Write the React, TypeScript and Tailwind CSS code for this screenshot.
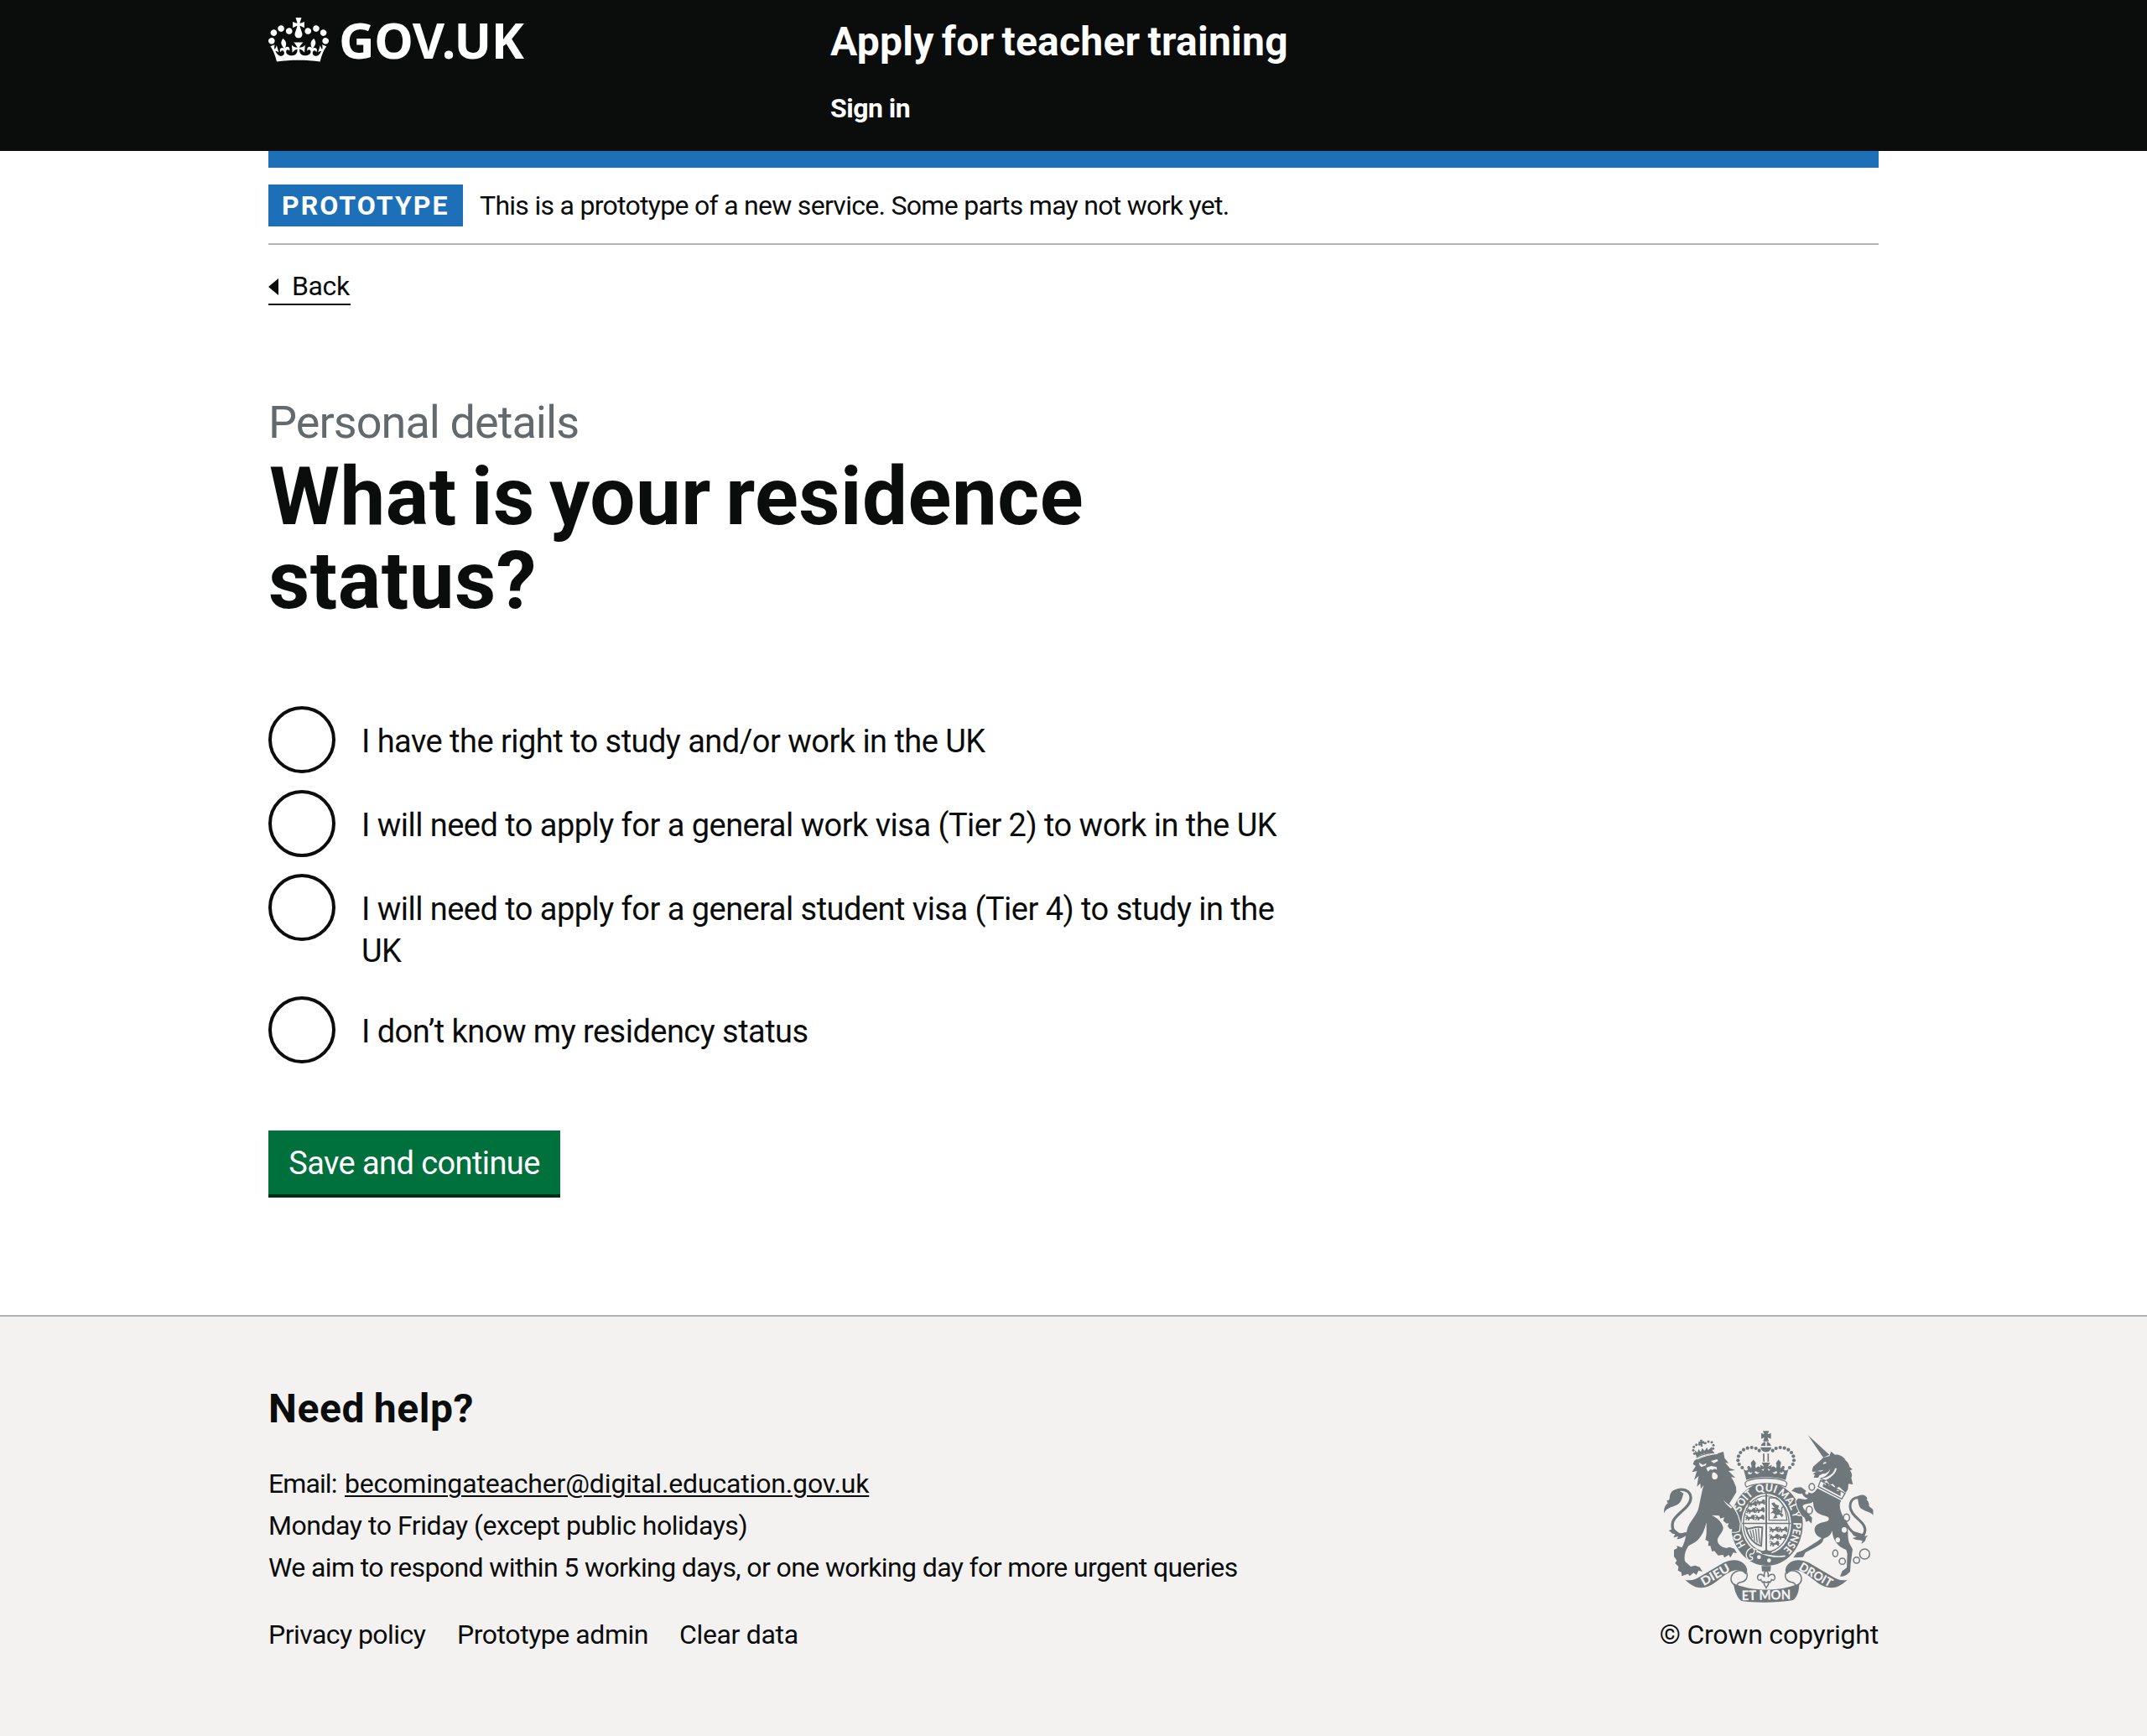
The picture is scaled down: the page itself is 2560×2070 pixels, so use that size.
import type { ReactNode } from 'react';

const INK = '#6f777b';
const PAPER = '#f3f2f1';

function Crown() {
  return (
    <svg viewBox="0 0 132 97" className="block h-[53px] w-[72px] fill-white" aria-hidden="true">
      <path d="M25 30.2c3.5 1.5 7.7-.2 9.1-3.7 1.5-3.6-.2-7.8-3.9-9.2-3.6-1.4-7.6.3-9.1 3.9-1.4 3.5.3 7.5 3.9 9zM9 39.5c3.6 1.5 7.8-.2 9.2-3.7 1.5-3.6-.2-7.8-3.9-9.1-3.6-1.5-7.6.2-9.1 3.8-1.4 3.5.3 7.5 3.8 9zM4.4 57.2c3.5 1.5 7.7-.2 9.1-3.8 1.5-3.6-.2-7.7-3.9-9.1-3.5-1.5-7.6.3-9.1 3.8-1.4 3.5.3 7.6 3.9 9.1zm38.3-21.4c3.5 1.5 7.7-.2 9.1-3.8 1.5-3.6-.2-7.7-3.9-9.1-3.6-1.5-7.6.3-9.1 3.8-1.3 3.6.4 7.7 3.9 9.1zm64.4-5.6c-3.6 1.5-7.8-.2-9.1-3.7-1.5-3.6.2-7.8 3.8-9.2 3.6-1.4 7.7.3 9.2 3.9 1.3 3.5-.4 7.5-3.9 9zm15.9 9.3c-3.6 1.5-7.7-.2-9.1-3.7-1.5-3.6.2-7.8 3.7-9.1 3.6-1.5 7.7.2 9.2 3.8 1.5 3.5-.3 7.5-3.8 9zm4.7 17.7c-3.6 1.5-7.8-.2-9.2-3.8-1.5-3.6.2-7.7 3.9-9.1 3.6-1.5 7.7.3 9.2 3.8 1.3 3.5-.4 7.6-3.9 9.1zM89.3 35.8c-3.6 1.5-7.8-.2-9.2-3.8-1.4-3.6.2-7.7 3.9-9.1 3.6-1.5 7.7.3 9.2 3.8 1.4 3.6-.3 7.7-3.9 9.1zM69.7 17.7l8.9 4.7V9.3l-8.9 2.8c-.2-.3-.5-.6-.9-.9L72.4 0H59.6l3.5 11.2c-.3.3-.6.5-.9.9l-8.8-2.8v13.1l8.8-4.7c.3.3.6.7.9.9l-5 15.4v.1c-.2.8-.4 1.6-.4 2.4 0 4.1 3.1 7.5 7 8.1h.2c.3 0 .7.1 1 .1.4 0 .7 0 1-.1h.2c4-.6 7.1-4.1 7.1-8.1 0-.8-.1-1.7-.4-2.4V34l-5.1-15.4c.4-.2.7-.6 1-.9zM66 92.8c16.9 0 32.8 1.1 47.1 3.2 4-16.9 8.9-26.7 14-33.5l-9.6-3.4c1 4.9 1.1 7.2 0 10.2-1.5-1.4-3-4.3-4.2-8.7L108.6 76c2.8-2 5-3.2 7.5-3.3-4.4 9.4-10 11.9-13.6 11.2-4.3-.8-6.3-4.6-5.6-7.9 1-4.7 5.7-5.9 8-.5 4.3-8.7-3-11.4-7.6-8.8 7.1-7.2 7.9-13.5 2.1-21.1-8 6.1-8.1 12.3-4.5 20.8-4.7-5.4-12.1-2.5-9.5 6.2 3.4-5.2 7.9-2 7.2 3.1-.6 4.3-6.4 7.8-13.5 7.2-10.3-.9-10.9-8-11.2-13.8 2.5-.5 7.1 1.8 11 7.3L80.2 60c-4.1 4.4-8 5.3-12.3 5.4 1.4-4.4 8-11.6 8-11.6H55.5s6.4 7.2 7.9 11.6c-4.2-.1-8-1-12.3-5.4l1.4 16.4c3.9-5.5 8.5-7.7 10.9-7.3-.3 5.8-.9 12.8-11.1 13.8-7.2.6-12.9-2.9-13.5-7.2-.7-5 3.8-8.3 7.1-3.1 2.7-8.7-4.6-11.6-9.4-6.2 3.7-8.5 3.6-14.7-4.6-20.8-5.8 7.6-5 13.9 2.2 21.1-4.7-2.6-11.9.1-7.7 8.8 2.3-5.5 7.1-4.2 8.1.5.7 3.3-1.3 7.1-5.7 7.9-3.5.7-9-1.8-13.5-11.2 2.5.1 4.7 1.3 7.5 3.3l-4.7-15.4c-1.2 4.4-2.7 7.2-4.3 8.7-1.1-3-.9-5.3 0-10.2l-9.5 3.4c5 6.9 9.9 16.7 14 33.5 14.8-2.1 30.8-3.2 47.7-3.2z" />
    </svg>
  );
}

const pearls: [number, number][] = [
  [352, 178], [341, 166], [337, 152], [339, 137], [346, 124], [357, 114], [371, 108], [386, 106], [401, 109], [413, 117],
];
const lionPearls: [number, number][] = [
  [181, 128], [177, 116], [179, 104], [188, 96], [199, 95], [220, 90], [231, 85], [243, 87], [249, 98], [248, 110],
];
const motto: [string, string, number][] = [
  ['HO', '16.6%', 50], ['SOIT', '37%', 78], ['QUI', '49.9%', 70], ['MAL', '62%', 78], ['Y', '70.4%', 20], ['PENSE', '82.2%', 106],
];

/* A passant guardian lion, used in rows on the shield. */
function Leopard({ x, y }: { x: number; y: number }) {
  return (
    <path
      transform={`translate(${x} ${y})`}
      d="M0 17l4-3-3-6 5-1-2-6 5 1 3 5h9l2-5 6-3 5 4-1 5 5 2-5 2 2 6-6 0-3-4-9 0-2 6-6 0 2-5-4-1-2 6zM-2 6l4-7 3 1-4 5z"
    />
  );
}

function RoyalArms() {
  const ribbonEnd = (
    <g>
      <path d="M148 579C170 584 186 577 202 567L286 518C312 506 338 504 356 520C370 532 374 548 364 560C350 542 326 541 306 553C268 572 250 606 204 608C180 606 165 595 148 579Z" />
      <path
        d="M362 549C340 541 314 551 312 574C311 586 318 594 327 600M368 554C374 572 364 586 346 588C338 589 334 594 332 602"
        fill="none" stroke={INK} strokeWidth="4.5"
      />
    </g>
  );
  return (
    <svg viewBox="72 46 750 615" className="block h-[205px] w-[250px]" fill={INK} role="img" aria-label="Royal coat of arms">
      {/* ribbon */}
      {ribbonEnd}
      <g transform="translate(876 0) scale(-1 1)">{ribbonEnd}</g>
      <path d="M321 592C385 622 492 622 556 592C556 616 550 642 534 652C475 662 400 662 350 655C333 644 324 618 321 592Z" />
      <g fill={PAPER} fontFamily="Lato" fontWeight="900" textAnchor="middle">
        <text fontSize="43" transform="translate(263 574) rotate(-30)" textLength="112" lengthAdjust="spacingAndGlyphs">DIEU</text>
        <text fontSize="43" transform="translate(608 574) rotate(30)" textLength="130" lengthAdjust="spacingAndGlyphs">DROIT</text>
        <text fontSize="48" transform="translate(438 651) rotate(-1)" textLength="176" lengthAdjust="spacingAndGlyphs">ET MON</text>
      </g>

      {/* fleur-de-lis pendant */}
      <path d="M421 530L455 530L453 549L423 549Z" />
      <path
        d="M438 545C430 553 429 560 432 569C425 557 410 556 407 568C405 578 412 584 419 579C420 586 425 588 431 586L430 594C432 600 436 604 438 608C440 604 444 600 446 594L445 586C451 588 456 586 457 579C464 584 471 578 469 568C466 556 451 557 444 569C447 560 446 553 438 545ZM422 588H454"
        fill="none" stroke={INK} strokeWidth="4.5"
      />

      {/* imperial crown */}
      <path d="M426 47H448L443 59L455 54V75L443 70L447 84H427L431 70L420 75V54L431 59Z" />
      <path d="M419 100C421 92 427 87 435 86V100ZM440 86C448 87 453 92 455 100H440ZM417 105H457C455 114 447 122 437 122C427 122 419 114 417 105Z" />
      {pearls.map(([x, y]) => (
        <g key={x}>
          <circle cx={x} cy={y} r="6.3" />
          <circle cx={874 - x} cy={y} r="6.3" />
        </g>
      ))}
      <path d="M429 128V157M445 128V157" stroke={INK} strokeWidth="5" />
      <path d="M356 181C362 190 368 190 374 184C366 178 372 167 380 174L383 180C389 172 383 167 383 162C384 156 390 155 392 149C395 155 400 156 401 163C400 168 396 172 402 180C408 170 416 172 418 182L427 190L431 181L417 188V168L430 175L422 160H452L444 175L457 168V188L443 181L447 190L456 182C458 172 466 170 472 180C478 172 474 168 473 163C474 156 479 155 482 149C485 155 490 156 491 162C491 167 485 172 491 180L494 174C502 167 508 178 500 184C506 190 512 190 518 181L507 222C470 208 404 208 367 222Z" />
      <path d="M372 198C378 204 386 203 389 194C383 198 378 197 376 191ZM396 194C401 203 410 202 414 194C409 196 404 195 402 190ZM460 194C464 202 473 203 478 194L472 190C470 195 465 196 460 194ZM485 194C488 203 496 204 502 198L498 191C496 197 491 198 485 194Z" fill={PAPER} />
      <path d="M369 226C402 212 472 212 505 226C514 230 513 238 507 247C480 232 394 232 367 247C361 238 360 230 369 226Z" fill={PAPER} stroke={INK} strokeWidth="4" />

      {/* garter */}
      <ellipse cx="440" cy="380" rx="129" ry="149" />
      <path d="M368 242C396 226 480 226 508 242" fill="none" stroke={PAPER} strokeWidth="5" />
      <ellipse cx="438" cy="379" rx="89" ry="108" fill={PAPER} />
      <ellipse cx="438" cy="379" rx="82" ry="100" fill="none" stroke={INK} strokeWidth="4" />
      <path id="garter-line" d="M438 495A97 116 0 0 1 438 263A97 116 0 0 1 438 495" fill="none" />
      <g fill={PAPER} fontFamily="Lato" fontWeight="900" fontSize="39" textAnchor="middle">
        {motto.map(([word, at, len]) => (
          <text key={word}>
            <textPath href="#garter-line" startOffset={at} textLength={len} lengthAdjust="spacingAndGlyphs">{word}</textPath>
          </text>
        ))}
      </g>
      <path d="M395 470C425 492 470 500 506 494" fill="none" stroke={PAPER} strokeWidth="5" />
      <path d="M386 464C366 472 360 492 374 508C386 512 392 506 388 498C380 500 376 492 382 486C392 490 400 478 394 470C404 468 408 474 404 482" fill={INK} stroke={PAPER} strokeWidth="4" />
      <circle cx="412" cy="498" r="7" fill={PAPER} />
      <circle cx="448" cy="510" r="7" fill={PAPER} />

      {/* shield quarters */}
      <path d="M435 272H441V472L455 480H420L435 472ZM352 375H526V380H352Z" />
      <path d="M438 474L460 478L452 488H424L418 478Z" />
      <Leopard x={370} y={298} />
      <Leopard x={400} y={292} />
      <Leopard x={366} y={322} />
      <Leopard x={398} y={320} />
      <Leopard x={362} y={347} />
      <Leopard x={397} y={347} />
      <Leopard x={448} y={390} />
      <Leopard x={480} y={390} />
      <Leopard x={448} y={416} />
      <Leopard x={476} y={416} />
      <Leopard x={450} y={440} />
      <path d="M448 286H474C496 300 508 325 512 366H448Z" fill="none" stroke={INK} strokeWidth="4" />
      <path d="M456 306L466 302L472 310L484 314L480 324L492 334L486 340L500 346L494 356L486 346L474 348L478 358L462 360L470 346L462 340L452 342L464 330L456 322L468 322Z" />
      <path d="M486 344C502 340 486 322 498 318" fill="none" stroke={INK} strokeWidth="4" />
      <path d="M366 394C378 404 396 384 424 392L420 458C396 452 374 430 366 394Z" fill="none" stroke={INK} strokeWidth="6" />
      <path d="M380 402L388 430M390 400L397 440M400 397L406 446M410 395L414 450" stroke={INK} strokeWidth="4" />

      {/* lion */}
      {lionPearls.map(([x, y]) => (
        <circle key={`${x}-${y}`} cx={x} cy={y} r="4.5" />
      ))}
      <path d="M201 78H210L209 84L216 83V93L209 91L211 102L203 103L203 92L196 94V84L202 85ZM186 134L182 116L192 124L196 112L204 122L209 108L217 118L226 106L230 116L243 104L246 118L250 124C228 124 204 130 190 140Z" />
      <path
        d="M188 148C206 138 232 130 262 128L285 121L289 144L304 162L291 160L308 180L327 187L303 190C312 198 318 206 328 214L312 212C322 224 324 234 330 248L331 266L320 284L306 306C318 318 330 334 336 350L344 378L341 404L330 408L314 408L316 398L308 398L300 388L304 376L296 378L284 368L288 356L274 360L270 350L243 348C262 358 280 372 284 392C284 410 268 420 264 434C262 446 268 454 282 462L296 466L306 462L324 468L333 484L320 482L310 500L304 490L288 500L284 490L266 492L252 476L244 478L238 458L230 458L232 442L220 436C226 420 224 396 224 374C216 410 200 434 182 446L160 458C148 474 142 500 148 514L168 532L184 528L200 534L210 550L196 546L188 562L178 554L164 566L158 558L136 566L134 552L122 546L124 532L112 520L118 510L108 496L108 472L120 466L118 458L136 464C148 446 150 420 154 404C160 372 190 350 196 322C202 296 206 270 214 240L204 254L202 234L190 246L196 208L180 222L190 190L172 194L186 172L176 166L180 154Z"
        stroke={PAPER} strokeWidth="7" paintOrder="stroke"
      />
      <g fill={PAPER}>
        <path d="M197 160L212 168L224 162L222 170L206 176L200 170ZM240 154L262 148L266 154L250 162ZM224 178L242 172L260 176L262 186L254 182L246 186L238 184L230 192L226 186ZM244 204C244 196 250 192 254 196C262 200 268 208 262 216C256 224 244 220 244 210Z" />
        <path d="M284 292C292 304 306 310 316 320L312 324C302 316 292 308 284 292Z" />
      </g>
      <path d="M191 148C210 138 240 130 264 128" fill="none" stroke={PAPER} strokeWidth="3" />
      <path d="M188 142C206 132 230 126 252 124" fill="none" stroke={INK} strokeWidth="4" />
      <path d="M152 414C118 426 96 404 104 372C112 344 170 320 168 284C166 258 136 250 112 262" fill="none" stroke={INK} strokeWidth="10" />
      <path d="M120 257C96 258 94 272 92 288C90 298 84 294 82 296L86 306C76 312 72 322 72 341C84 318 108 320 124 308C136 298 138 282 142 270ZM106 396L88 404C98 406 98 416 112 416L106 428L124 424L118 434C140 430 154 424 158 408L130 414Z" />

      {/* unicorn */}
      <path d="M587 62L664 132L642 142Z" />
      <path d="M603 184L606 174L632 152L642 142L664 137L670 120L684 132C700 130 712 138 722 150L716 148C730 156 736 170 736 176L747 184L738 188C746 202 746 208 742 214L748 238L732 236L730 256L722 268L698 246L690 252L676 236L666 240L654 224L644 230L630 216C650 212 664 198 668 180C664 192 652 200 640 200L628 206L624 214L608 214L612 202L604 200L618 192L602 192Z" />
      <path d="M654 160C650 164 644 166 640 164C644 158 650 156 654 160ZM620 190L644 186L634 192ZM690 180C688 196 674 210 652 222L634 218C660 212 680 200 684 180Z" fill={PAPER} />
      <path d="M632 224L720 270L708 290L624 246Z" fill={PAPER} stroke={INK} strokeWidth="4" />
      <path d="M640 246L642 234L650 240L656 230L662 244L672 240L680 250L688 246L692 262L704 262L704 280Z" />
      <path
        d="M621 252L706 296C696 312 702 336 720 366C736 392 726 412 734 446L747 470L740 522L738 550C728 560 716 570 702 567L710 548L726 536L728 486L724 472C696 462 676 440 674 404C664 430 654 424 642 434C644 452 604 466 578 482L570 498L535 500L548 482L568 474C592 460 616 446 636 430C612 422 602 396 620 382C638 370 660 376 662 362C664 350 640 352 622 340C606 328 606 306 606 300C592 310 574 304 568 316C572 330 592 344 602 358L600 378L590 368L580 372L576 358L564 348L550 322L544 298L552 288L578 292C592 288 596 280 600 274L592 288C580 288 570 280 566 270C552 276 544 264 528 262L540 250L562 248C574 254 584 268 602 270C612 266 616 258 621 252Z"
        stroke={PAPER} strokeWidth="6" paintOrder="stroke"
      />
      <g fill="none" stroke={INK} strokeWidth="4.5">
        <ellipse cx="601" cy="247" rx="10" ry="12" />
        <ellipse cx="592" cy="330" rx="11" ry="14" />
        <ellipse cx="725" cy="357" rx="11" ry="13" />
        <ellipse cx="685" cy="485" rx="9" ry="12" />
        <ellipse cx="710" cy="513" rx="11" ry="11" />
        <ellipse cx="761" cy="509" rx="11" ry="11" />
        <circle cx="790" cy="487" r="18" />
      </g>
      <g fill={PAPER}>
        <circle cx="583" cy="268" r="6" />
        <ellipse cx="717" cy="401" rx="9" ry="10" />
        <ellipse cx="694" cy="437" rx="8" ry="9" />
      </g>
      <path d="M718 366C740 416 778 436 790 410C802 372 740 358 738 318C738 292 756 280 776 288" fill="none" stroke={INK} strokeWidth="9" />
      <path d="M762 282C780 270 796 276 800 290L796 292C806 300 806 310 806 316L820 328L821 348C806 332 776 334 770 314C766 302 768 292 762 282ZM744 404C744 418 752 424 762 426L746 430C762 440 776 436 782 440L778 450C792 444 794 436 794 430L802 420L790 424L796 404L784 416Z" />
    </svg>
  );
}

function Radio({ children }: { children: ReactNode }) {
  return (
    <label className="flex min-h-20">
      <span className="size-20 shrink-0 rounded-full border-4 border-[#0b0c0c] bg-white" />
      <span className="ml-[31px] pt-[17px] pb-[9px] text-[38px] leading-[50px] tracking-[-0.53px]">{children}</span>
    </label>
  );
}

export default function App() {
  return (
    <div className="flex min-h-[2070px] w-full flex-col bg-white font-['Roboto',sans-serif] text-[32px] leading-[50px] text-[#0b0c0c]">
      <header className="h-[180px] bg-[#0b0c0c] text-white">
        <div className="mx-auto flex w-[1920px]">
          <div className="flex w-[670px]">
            <div className="pt-[21px]">
              <Crown />
            </div>
            <span className="ml-[12px] pt-[17px] font-['Noto_Sans',sans-serif] text-[59px] leading-[60px] font-bold tracking-[-0.5px]">GOV.UK</span>
          </div>
          <div className="pt-5">
            <div className="text-[48px] leading-[60px] font-bold tracking-[0.24px] [word-spacing:-3px]">Apply for teacher training</div>
            <div className="mt-[29px] leading-10 font-bold tracking-[-0.5px]">Sign in</div>
          </div>
        </div>
      </header>

      <div className="mx-auto h-[1388px] w-[1920px]">
        <div className="h-5 bg-[#1d70b8]" />
        <div className="flex border-b-2 border-[#b1b4b6] py-5">
          <strong className="w-[232px] bg-[#1d70b8] pl-4 font-bold tracking-[2.05px] text-white">PROTOTYPE</strong>
          <span className="ml-5 tracking-[-0.71px]">This is a prototype of a new service. Some parts may not work yet.</span>
        </div>
        <a className="mt-[29px] flex h-[43px] w-[98px] items-start border-b-2 border-[#0b0c0c] leading-10">
          <svg viewBox="0 0 12 20" className="mt-[11px] h-5 w-3 fill-[#0b0c0c]" aria-hidden="true">
            <path d="M0 10L12 0V20Z" />
          </svg>
          <span className="ml-4 tracking-[-0.4px]">Back</span>
        </a>

        <main className="mt-[110px] w-[1270px]">
          <div className="text-[54px] leading-[60px] tracking-[-0.95px] text-[#626a6e]">Personal details</div>
          <h1 className="mt-2 indent-px text-[96px] leading-[100px] font-bold tracking-[0.5px] [word-spacing:-7px]">
            What is your residence status?
          </h1>
          <div className="mt-[100px] flex flex-col gap-5">
            <Radio>I have the right to study and/or work in the UK</Radio>
            <Radio>I will need to apply for a general work visa (Tier 2) to work in the UK</Radio>
            <Radio>
              I will need to apply for a general student visa (Tier 4) to study in the
              <br />
              UK
            </Radio>
            <Radio>I don’t know my residency status</Radio>
          </div>
          <button className="mt-20 block h-20 w-[348px] border-b-4 border-[#002d18] bg-[#00703c] pt-[2px] text-[38px] leading-[50px] tracking-[-0.59px] text-white">
            Save and continue
          </button>
        </main>
      </div>

      <footer className="flex-1 border-t-2 border-[#b1b4b6] bg-[#f3f2f1]">
        <div className="mx-auto flex w-[1920px] justify-between pt-20">
          <div>
            <h2 className="text-[48px] leading-[60px] font-bold tracking-[0.6px] [word-spacing:-2px]">Need help?</h2>
            <div className="mt-[34px]">
              <div className="flex">
                <span className="w-[91px] tracking-[-0.9px]">Email:</span>
                <a className="tracking-[-0.16px] underline decoration-2 underline-offset-[3px]">becomingateacher@digital.education.gov.uk</a>
              </div>
              <div className="tracking-[-0.45px]">Monday to Friday (except public holidays)</div>
              <div className="tracking-[-0.61px]">We aim to respond within 5 working days, or one working day for more urgent queries</div>
            </div>
            <div className="mt-[30px] flex">
              <a className="w-[225px] tracking-[-0.55px]">Privacy policy</a>
              <a className="w-[265px] tracking-[-0.45px]">Prototype admin</a>
              <a className="tracking-[-0.34px]">Clear data</a>
            </div>
          </div>
          <div className="flex flex-col items-end pt-[56px]">
            <div className="mr-[6px]">
              <RoyalArms />
            </div>
            <div className="mt-[13px] tracking-[-0.22px]">© Crown copyright</div>
          </div>
        </div>
      </footer>
    </div>
  );
}
